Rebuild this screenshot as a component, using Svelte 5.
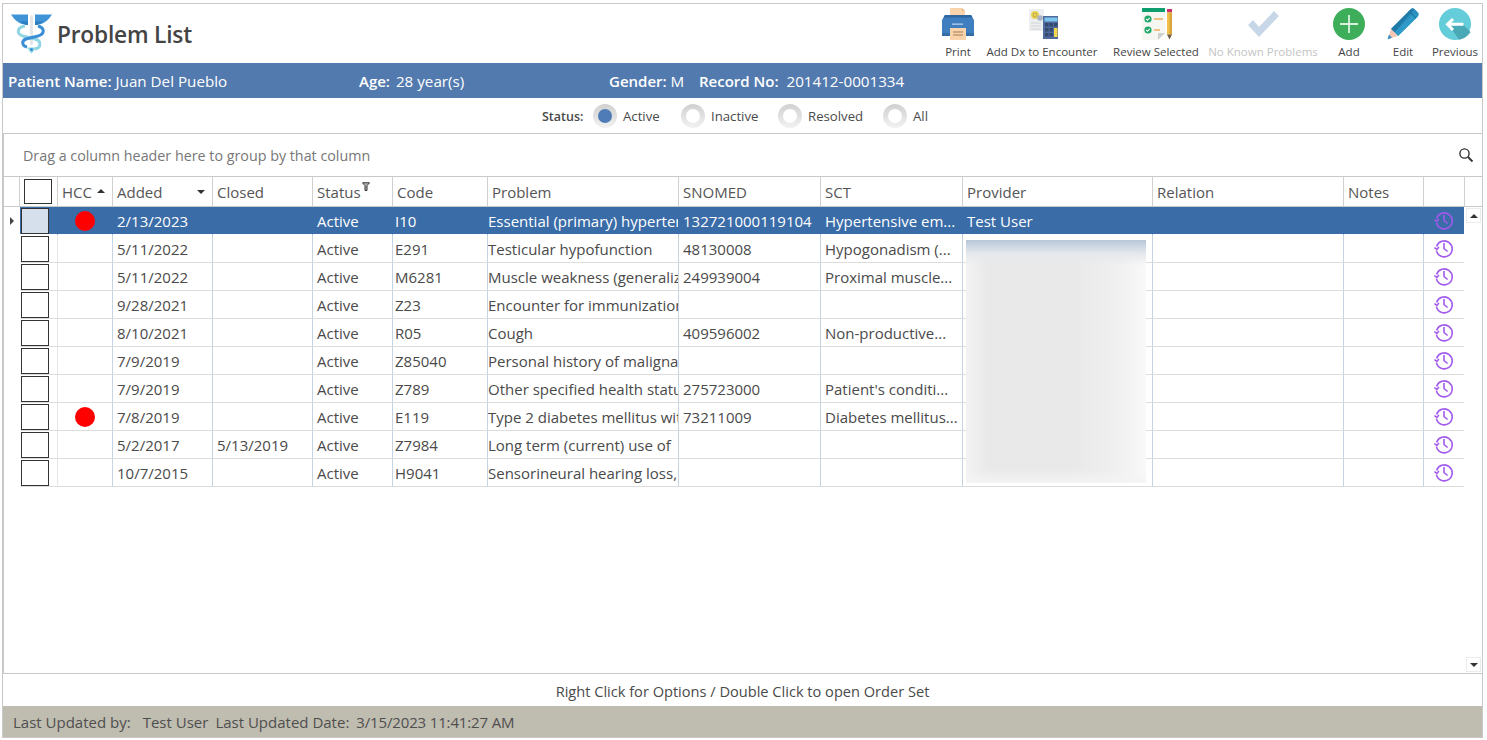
<script>
  const cols = ['', 'HCC', 'Added', 'Closed', 'Status', 'Code', 'Problem', 'SNOMED', 'SCT', 'Provider', 'Relation', 'Notes', ''];
  const rows = [
    { hcc: true, added: '2/13/2023', closed: '', code: 'I10', problem: 'Essential (primary) hypertension', snomed: '132721000119104', sct: 'Hypertensive em...', provider: 'Test User' },
    { added: '5/11/2022', closed: '', code: 'E291', problem: 'Testicular hypofunction', snomed: '48130008', sct: 'Hypogonadism (...' },
    { added: '5/11/2022', closed: '', code: 'M6281', problem: 'Muscle weakness (generalized)', snomed: '249939004', sct: 'Proximal muscle...' },
    { added: '9/28/2021', closed: '', code: 'Z23', problem: 'Encounter for immunization', snomed: '', sct: '' },
    { added: '8/10/2021', closed: '', code: 'R05', problem: 'Cough', snomed: '409596002', sct: 'Non-productive...' },
    { added: '7/9/2019', closed: '', code: 'Z85040', problem: 'Personal history of malignant', snomed: '', sct: '' },
    { added: '7/9/2019', closed: '', code: 'Z789', problem: 'Other specified health status', snomed: '275723000', sct: "Patient's conditi..." },
    { hcc: true, added: '7/8/2019', closed: '', code: 'E119', problem: 'Type 2 diabetes mellitus without', snomed: '73211009', sct: 'Diabetes mellitus...' },
    { added: '5/2/2017', closed: '5/13/2019', code: 'Z7984', problem: 'Long term (current) use of', snomed: '', sct: '' },
    { added: '10/7/2015', closed: '', code: 'H9041', problem: 'Sensorineural hearing loss, bilateral', snomed: '', sct: '' }
  ];
  const radios = [
    { label: 'Active', on: true, w: 88 },
    { label: 'Inactive', w: 97 },
    { label: 'Resolved', w: 105 },
    { label: 'All', w: 60 }
  ];
</script>

<div class="frame">
  <header class="top">
    <div class="brand">
      <svg class="logo" viewBox="0 0 41 41" width="41" height="41">
        <path d="M0 1.5H17V12C10 12 4 8 0 1.5z" fill="#3e94d6"/>
        <path d="M41 1.5H24V12C31 12 37 8 41 1.5z" fill="#3e94d6"/>
        <path d="M9 8.5H17V12C14 12 11 10.5 9 8.5zM32 8.5H24V12C27 12 30 10.5 32 8.5z" fill="#2c7cc0"/>
        <rect x="19" y="2" width="3" height="30" rx="1.5" fill="#e4e7e9"/>
        <path d="M14 13C6 14 5 21 12 23L24 26C31 28 30 35 24 36" fill="none" stroke="#8fd6e4" stroke-width="3"/>
        <path d="M27 13C34 15 34 21 27 23L15 26C10 28 11 33 16 34" fill="none" stroke="#3a8fd6" stroke-width="3"/>
        <path d="M16 34.5C18 37 19 39 20.5 40.5 22 39 23.5 37 25 34.5z" fill="#8fd6e4"/>
        <circle cx="20.5" cy="36.5" r="1.5" fill="#3a8fd6"/>
      </svg>
      <h1>Problem List</h1>
    </div>
    <nav class="tools">
      <div class="tool t-print">
        <svg viewBox="0 0 32 32" width="32" height="32">
          <path d="M8 0h12l3 3v10H8z" fill="#f8d3ab"/>
          <path d="M20 0l3 3h-3z" fill="#e3b98e"/>
          <path d="M3 7H29L32 12V26c0 1-1 2-2 2H2c-1 0-2-1-2-2V12z" fill="#3f7fc0"/>
          <path d="M3 7H29L30.5 9.5H1.5z" fill="#2f659e"/>
          <rect x="0" y="25" width="32" height="3" fill="#336ea8"/>
          <rect x="10" y="15.5" width="11" height="1.3" fill="#b4cfe8"/>
          <path d="M8 20h16v12H8z" fill="#f8d3ab"/>
          <path d="M11 24h10M11 27h10" stroke="#a87a4e" stroke-width="1.1"/>
        </svg>
        <span>Print</span>
      </div>
      <div class="tool t-dx">
        <svg viewBox="-1 0 32 32" width="32" height="32">
          <rect x="2" y="1" width="15" height="22" fill="#eceeef"/>
          <circle cx="8" cy="7" r="4" fill="#ecd34f"/>
          <circle cx="8" cy="7" r="2" fill="none" stroke="#a8a050" stroke-width=".8"/>
          <circle cx="13" cy="10" r="2.8" fill="#a8b3c4"/>
          <path d="M4 15h10M4 18h10M4 21h10" stroke="#d2d6da" stroke-width="1"/>
          <rect x="16" y="8" width="16" height="23" fill="#4f6b9c"/>
          <rect x="17.5" y="9.5" width="13" height="4" fill="#7cc6ee"/>
          <path d="M18 15h3.5v3.5H18zM22.5 15H26v3.5h-3.5zM27 15h3.5v3.5H27zM18 20h3.5v3.5H18zM22.5 20H26v3.5h-3.5zM18 25h3.5v3.5H18zM22.5 25H26v3.5h-3.5z" fill="#36486e"/>
          <rect x="27" y="20" width="3.5" height="9" fill="#f5d64a"/>
        </svg>
        <span>Add Dx to Encounter</span>
      </div>
      <div class="tool t-review">
        <svg viewBox="0 0 32 32" width="32" height="32">
          <path d="M2 4h23v21l-7 7H2z" fill="#f6f6f3"/>
          <path d="M18 32l7-7h-7z" fill="#cfcfcd"/>
          <rect x="2" y="0" width="23" height="4" fill="#0e9e70"/>
          <circle cx="8" cy="11" r="3.6" fill="#1fa868"/>
          <circle cx="8" cy="22" r="3.6" fill="#1fa868"/>
          <path d="M6.2 11l1.3 1.3 2.2-2.4M6.2 22l1.3 1.3 2.2-2.4" fill="none" stroke="#fff" stroke-width="1.1"/>
          <path d="M14 11h9M14 22h6" stroke="#f0b060" stroke-width="1.4"/>
          <rect x="27" y="1" width="5" height="3.5" fill="#c8306b"/>
          <rect x="27" y="4.5" width="5" height="22" fill="#f0c04a"/>
          <rect x="29.5" y="4.5" width="2.5" height="22" fill="#dba63a"/>
          <path d="M27 26.5h5l-2.5 5z" fill="#6a5a48"/>
        </svg>
        <span>Review Selected</span>
      </div>
      <div class="tool t-none dim">
        <svg viewBox="0 0 32 32" width="32" height="32">
          <path d="M1 17l5-5 6 7L27 3l5 5-20 21z" fill="#c8d7e8"/>
        </svg>
        <span>No Known Problems</span>
      </div>
      <div class="tool t-add">
        <svg viewBox="0 0 32 32" width="32" height="32">
          <circle cx="16" cy="16" r="16" fill="#3fae5a"/>
          <path d="M16 7v18M7 16h18" stroke="#d8f2de" stroke-width="1.8"/>
        </svg>
        <span>Add</span>
      </div>
      <div class="tool t-edit">
        <svg viewBox="0 0 32 32" width="32" height="32">
          <path d="M4 21L24 1c1-1 2.5-1 3.5 0L31 4.5c1 1 1 2.5 0 3.5L11 28z" fill="#2a8fbf"/>
          <path d="M4 21L24 1c1-.6 2-.6 3 .2L7.5 24.5z" fill="#1f7aa8"/>
          <path d="M7.5 24.5L27 5l4 3.5L11 28z" fill="#2f9ac8"/>
          <path d="M22 3l7 7" stroke="#1f78a6" stroke-width="1.2"/>
          <path d="M4 21l7 7-10 3z" fill="#f6c6b4"/>
          <path d="M2 26.5L5 29.7 .5 31.5z" fill="#3a8fc4"/>
        </svg>
        <span>Edit</span>
      </div>
      <div class="tool t-prev">
        <svg viewBox="0 0 32 32" width="32" height="32">
          <circle cx="16" cy="16" r="16" fill="#64cdd9"/>
          <path d="M14 23l-1-5 11-1.5 7.5 7.5C29 28 25 31 20 31.7z" fill="#4aa9b6"/>
          <path d="M14 11l-5.500 5.300L14 22M9 16.300h15.500" fill="none" stroke="#fff" stroke-width="3"/>
        </svg>
        <span>Previous</span>
      </div>
    </nav>
  </header>

  <div class="patient">
    <div class="p p-name"><b>Patient Name:</b> Juan Del Pueblo</div>
    <div class="p p-age"><b>Age:</b> 28 year(s)</div>
    <div class="p p-gender"><b>Gender:</b> M</div>
    <div class="p"><b>Record No:</b>&nbsp; 201412-0001334</div>
  </div>

  <div class="status">
    <span class="status-label">Status:</span>
    {#each radios as r}
      <div class="radio-item" style="width:{r.w}px">
        <span class="radio"><span class="dot" class:on={r.on}></span></span>
        <span>{r.label}</span>
      </div>
    {/each}
  </div>

  <section class="grid">
    <div class="group">
      <span>Drag a column header here to group by that column</span>
      <svg viewBox="0 0 16 16" width="16" height="16"><circle cx="6.5" cy="6.5" r="4.6" fill="none" stroke="#333" stroke-width="1.4"/><path d="M10 10l4.500 4.500" stroke="#333" stroke-width="1.8"/></svg>
    </div>
    <div class="head">
      <div class="hc"></div>
      {#each cols as c, i}
        <div class="hc" class:check={i === 0}>
          {#if i === 0}<span class="box"></span>{:else}{c}{/if}
          {#if c === 'HCC'}<i class="tri up hcc-sort"></i>{/if}
          {#if c === 'Added'}<i class="tri down added-sort"></i>{/if}
          {#if c === 'Status'}
            <svg class="funnel" viewBox="0 0 8 9" width="8" height="9"><path d="M.5.8h7L5 3.6v4.900H3V3.600z" fill="#bbb" stroke="#333" stroke-width="1"/></svg>
          {/if}
        </div>
      {/each}
    </div>
    <div class="body">
      {#each rows as r, i}
        <div class="row" class:sel={i === 0}>
          <div class="ind">{#if i === 0}<i class="tri right"></i>{/if}</div>
          <div class="c check"><span class="box"></span></div>
          <div class="c hcc">{#if r.hcc}<span class="red"></span>{/if}</div>
          <div class="c">{r.added}</div>
          <div class="c">{r.closed}</div>
          <div class="c">Active</div>
          <div class="c code">{r.code}</div>
          <div class="c prob">{r.problem}</div>
          <div class="c">{r.snomed}</div>
          <div class="c">{r.sct}</div>
          <div class="c">{r.provider ?? ''}</div>
          <div class="c"></div>
          <div class="c"></div>
          <div class="c hist">
            <svg viewBox="0 0 20 20" width="20" height="20" fill="none" stroke="#a259ec" stroke-width="1.6">
              <path d="M2.6 8.4A8 8 0 1 1 2.4 12.6"/>
              <path d="M.3 9.6l2.600 1.900 2-2.600"/>
              <path d="M10 5v5.500l3.600 3"/>
            </svg>
          </div>
        </div>
      {/each}
      <div class="blur"></div>
      <div class="sb up-b"><i class="tri up"></i></div>
      <div class="sb dn-b"><i class="tri down"></i></div>
    </div>
  </section>

  <div class="hint">Right Click for Options / Double Click to open Order Set</div>
  <footer class="foot">
    <span>Last Updated by:</span>
    <span class="f-user">Test User</span>
    <span class="f-label">Last Updated Date:</span>
    <span class="f-date">3/15/2023 11:41:27 AM</span>
  </footer>
</div>

<style>
  :global(body) { margin: 0; background: #fff; }
  .frame {
    box-sizing: border-box;
    width: 1481px;
    height: 735px;
    margin: 3px 0 0 2px;
    border: 1px solid #c8c8c8;
    display: flex;
    flex-direction: column;
    font-family: "Open Sans", "Noto Sans", sans-serif;
    font-size: 15px;
    color: #4a4a4a;
    background: #fff;
    overflow: hidden;
  }
  .top { height: 59px; display: flex; justify-content: space-between; flex-shrink: 0; }
  .brand { display: flex; align-items: flex-start; padding: 9px 0 0 8px; }
  .logo { display: block; }
  h1 { margin: 6px 0 0 5px; font-size: 22.7px; font-weight: 600; color: #444; line-height: 32px; letter-spacing: -.2px; }
  .tools { display: flex; padding-right: 2px; }
  .tool { display: flex; flex-direction: column; align-items: center; padding-top: 4px; font-size: 11.5px; color: #444; white-space: nowrap; }
  .tool svg { display: block; }
  .tool span { margin-top: 4px; line-height: 16px; }
  .dim { color: #c4c4c4; }
  .t-print { width: 36px; }
  .t-dx { width: 132px; }
  .t-review { width: 96px; }
  .t-none { width: 118px; }
  .t-add { width: 54px; }
  .t-edit { width: 54px; }
  .t-prev { width: 50px; }

  .patient { height: 35px; background: #527aae; color: #fff; display: flex; align-items: center; padding-left: 5px; flex-shrink: 0; font-size: 15.2px; padding-top: 1px; box-sizing: border-box; }
  .patient b { font-weight: 600; font-size: 15px; }
  .p { white-space: nowrap; }
  .p-name { width: 351px; }
  .p-age { width: 250px; }
  .p-age b { margin-right: 2px; }
  .p-gender { width: 90px; }

  .status { height: 35px; display: flex; align-items: center; padding-left: 539px; padding-top: 1px; box-sizing: border-box; font-size: 13.2px; flex-shrink: 0; }
  .status-label { width: 51px; font-size: 12.5px; font-weight: 600; }
  .radio-item { display: flex; align-items: center; gap: 6px; }
  .radio { width: 24px; height: 24px; border-radius: 50%; background: linear-gradient(#d0d0d0, #f2f2f2); display: flex; align-items: center; justify-content: center; margin-top: -1px; }
  .dot { width: 14px; height: 14px; border-radius: 50%; background: #fff; }
  .dot.on { background: #4f7cb6; }

  .grid { flex: 1; min-height: 0; display: flex; flex-direction: column; border: solid #c8c8c8; border-width: 1px 0 1px 1px; }
  .group { height: 42px; display: flex; align-items: center; justify-content: space-between; padding: 0 8px 0 19px; border-bottom: 1px solid #c8c8c8; color: #777; flex-shrink: 0; box-sizing: content-box; font-size: 14.3px; }
  .head, .row { display: grid; grid-template-columns: 16px 38px 55px 100px 100px 80px 95px 191px 142px 142px 190px 191px 80px 41px; }
  .head { height: 30px; border-bottom: 1px solid #c8c8c8; flex-shrink: 0; box-sizing: border-box; }
  .hc { position: relative; box-sizing: border-box; border-right: 1px solid #d0d0d0; padding-left: 4px; line-height: 30px; white-space: nowrap; color: #555; }
  .hc.check { padding: 2px 0 0 4px; }
  .box { display: block; box-sizing: content-box; border: 1px solid #333; background: #fff; width: 26px; height: 23px; }
  .tri { display: block; width: 0; height: 0; border-style: solid; border-color: transparent; }
  .tri.up { border-width: 0 4px 4px; border-bottom-color: #333; }
  .tri.down { border-width: 4px 4px 0; border-top-color: #333; }
  .tri.right { border-width: 4px 0 4px 4px; border-left-color: #444; }
  .hcc-sort { position: absolute; left: 39px; top: 12px; }
  .added-sort { position: absolute; left: 84px; top: 13px; }
  .funnel { position: absolute; left: 49px; top: 5px; }

  .body { position: relative; flex: 1; min-height: 0; }
  .row { height: 28px; box-sizing: border-box; }
  .ind { display: flex; align-items: center; padding-left: 6px; box-sizing: border-box; }
  .c { box-sizing: border-box; padding-left: 4px; border-right: 1px solid #c5d3e2; border-bottom: 1px solid #dcdcdc; line-height: 28px; height: 28px; white-space: nowrap; overflow: hidden; color: #4a4a4a; }
  .c.check { padding: 1px 0 0 1px; border-right-color: #e6e6e6; }
  .c.check .box { height: 24px; }
  .c.hcc { display: flex; align-items: center; justify-content: center; padding: 0; }
  .c.code { padding-left: 2px; }
  .c.prob { padding-left: 0; }
  .c.hist { padding: 3px 0 0 10px; line-height: 0; border-right: 0; margin-right: 1px; }
  .red { width: 20px; height: 20px; border-radius: 50%; background: #f00; }
  .sel .c { background: #3a6ca8; color: #fff; border-right-color: #3a6ca8; border-bottom-color: #fff; }
  .sel .box { background: #d6e0ec; }

  .blur {
    position: absolute;
    left: 962px;
    top: 33px;
    width: 180px;
    height: 243px;
    background:
      linear-gradient(to bottom, #b8c7d9 0, #e6e9ec 14px, rgba(236,236,236,0) 26px),
      linear-gradient(to top, #f4f4f4 0, rgba(244,244,244,0) 14px),
      linear-gradient(to right, #f3f3f3, #e9e9e9 12%, #e9e9e9 60%, #f0f0f0 85%, #f9f9f9);
  }
  .sb { position: absolute; left: 1462px; width: 13px; height: 13px; border: 1px solid #ececec; background: #fff; display: flex; align-items: center; justify-content: center; }
  .up-b { top: 1px; }
  .dn-b { bottom: 1px; }

  .hint { height: 32px; padding-top: 1px; box-sizing: border-box; display: flex; align-items: center; justify-content: center; flex-shrink: 0; font-size: 14.6px; }
  .foot { height: 31px; background: #bfbcb0; display: flex; align-items: center; padding-left: 10px; flex-shrink: 0; color: #4f4f4f; white-space: nowrap; }
  .f-user { margin-left: 12px; }
  .f-label { margin-left: 7px; }
  .f-date { margin-left: 7px; letter-spacing: -.15px; }
</style>
